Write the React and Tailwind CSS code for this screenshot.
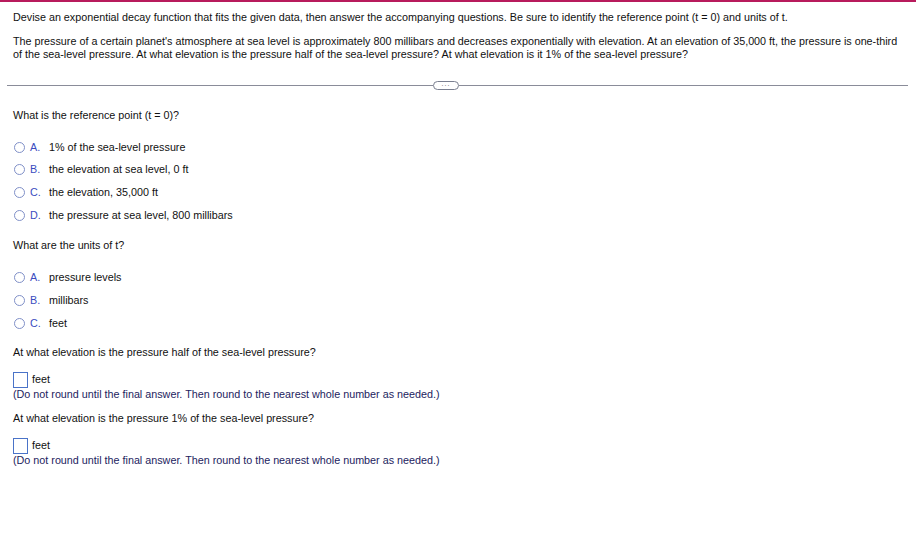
import React from 'react';

const q1 = [
  ['A.', '1% of the sea-level pressure'],
  ['B.', 'the elevation at sea level, 0 ft'],
  ['C.', 'the elevation, 35,000 ft'],
  ['D.', 'the pressure at sea level, 800 millibars'],
];

const q2 = [
  ['A.', 'pressure levels'],
  ['B.', 'millibars'],
  ['C.', 'feet'],
];

function Option({ letter, text }) {
  return (
    <div className="flex items-center h-[22.67px]">
      <span className="ml-px w-[11px] h-[11px] rounded-full border border-[#8090c8] bg-white" />
      <span className="ml-[5px] w-[19px] text-[#3b4cc0]">{letter}</span>
      <span>{text}</span>
    </div>
  );
}

function Answer() {
  return (
    <>
      <div className="flex items-center mt-[13px] h-[16px]">
        <span className="w-[15px] h-[16px] border border-[#4a73c8] bg-white" />
        <span className="ml-[4px]">feet</span>
      </div>
      <p className="text-[#23235e]">
        (Do not round until the final answer. Then round to the nearest whole number as needed.)
      </p>
    </>
  );
}

export default function App() {
  return (
    <div className="w-full min-h-[538px] bg-white border-t-2 border-[#b81b5c] font-['Liberation_Sans',Arial,sans-serif] text-[10.78px] leading-[13px] text-[#111]">
      {/* Problem statement */}
      <div className="px-[13px] pt-[9px]">
        <p>
          Devise an exponential decay function that fits the given data, then answer the accompanying questions. Be sure to identify the reference point (t = 0) and units of t.
        </p>
        <p className="mt-[11px]">
          The pressure of a certain planet's atmosphere at sea level is approximately 800 millibars and decreases exponentially with elevation. At an elevation of 35,000 ft, the pressure is one-third of the sea-level pressure. At what elevation is the pressure half of the sea-level pressure? At what elevation is it 1% of the sea-level pressure?
        </p>
      </div>

      {/* Divider */}
      <div className="flex items-center mt-[19px] pl-[7px] pr-[8px] h-[10px]">
        <div className="w-[426px] h-px bg-[#8a8c99]" />
        <div className="w-[26px] h-[9px] rounded-full border border-[#7a7f90] bg-white flex items-center justify-center">
          <span className="text-[7px] leading-[7px] tracking-[1px] text-[#555] -mt-[3px]">...</span>
        </div>
        <div className="flex-1 h-px bg-[#8a8c99]" />
      </div>

      {/* Questions */}
      <div className="px-[13px]">
        <p className="mt-[19px]">What is the reference point (t = 0)?</p>
        <div className="mt-[14px]">
          {q1.map(([l, t]) => (
            <Option key={l} letter={l} text={t} />
          ))}
        </div>

        <p className="mt-[12px]">What are the units of t?</p>
        <div className="mt-[15px]">
          {q2.map(([l, t]) => (
            <Option key={l} letter={l} text={t} />
          ))}
        </div>

        <p className="mt-[11px]">At what elevation is the pressure half of the sea-level pressure?</p>
        <Answer />

        <p className="mt-[11px]">At what elevation is the pressure 1% of the sea-level pressure?</p>
        <Answer />
      </div>
    </div>
  );
}
